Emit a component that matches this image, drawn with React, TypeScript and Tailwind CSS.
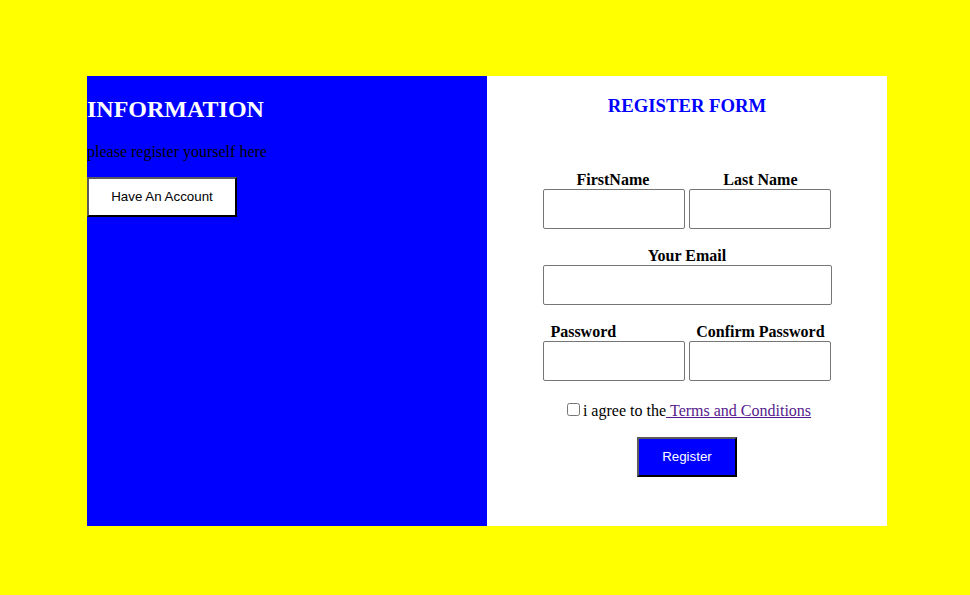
const serif = "font-['Liberation_Serif','Times_New_Roman',serif]";

const Field = ({ wide }: { wide?: boolean }) => (
  <input
    type="text"
    className={
      "h-[40px] rounded-[2px] border border-[#767676] bg-white px-1 " +
      (wide ? "w-[289px]" : "w-[142px]")
    }
  />
);

const outset =
  "border-2 border-t-[#5a5a5a] border-l-[#5a5a5a] border-r-black border-b-black font-['Liberation_Sans',Arial,sans-serif] text-[13.33px]";

export default function App() {
  return (
    <div className={`min-h-[595px] w-full bg-[#ffff00] pt-[76px] ${serif}`}>
      <div className="ml-[87px] flex h-[450px] w-[800px]">
        {/* Info */}
        <div className="w-[400px] bg-[#0000ff]">
          <h2 className="mt-[20px] text-[24px] font-bold leading-[26.5px] text-white">
            INFORMATION
          </h2>
          <p className="mt-[20px] text-[16px] leading-[17.7px] text-black">
            please register yourself here
          </p>
          <button className={`mt-[17px] h-[40px] w-[150px] bg-white text-black ${outset}`}>
            Have An Account
          </button>
        </div>

        {/* Form */}
        <div className="flex w-[400px] flex-col items-center bg-white">
          <h3 className="mt-[19px] text-[18.72px] font-bold leading-[22px] text-[#0000ff]">
            REGISTER FORM
          </h3>

          <div className="mt-[54px] flex gap-[74px] text-[16px] font-bold leading-[18px]">
            <span>FirstName</span>
            <span>Last Name</span>
          </div>
          <div className="flex gap-[4px]">
            <Field />
            <Field />
          </div>

          <div className="mt-[18px] text-[16px] font-bold leading-[18px]">Your Email</div>
          <Field wide />

          <div className="mt-[18px] flex gap-[80px] text-[16px] font-bold leading-[18px]">
            <span className="ml-[1px]">Password</span>
            <span>Confirm Password</span>
          </div>
          <div className="flex gap-[4px]">
            <Field />
            <Field />
          </div>

          <label className="mt-[21px] flex items-start text-[16px] leading-[18px]">
            <input type="checkbox" className="mt-[1px] mr-[3px] ml-[4px] h-[13px] w-[13px]" />
            <span>i agree to the</span>
            <a href="#" className="text-[#551a8b] underline">
              &nbsp;Terms and Conditions
            </a>
          </label>

          <button className={`mt-[17px] h-[40px] w-[100px] bg-[#0000ff] text-white ${outset}`}>
            Register
          </button>
        </div>
      </div>
    </div>
  );
}
